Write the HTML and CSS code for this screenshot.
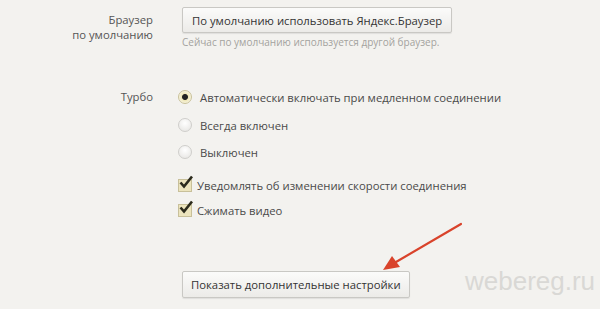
FILE: index.html
```html
<!DOCTYPE html>
<html lang="ru">
<head>
    <meta charset="UTF-8">
    <meta name="viewport" content="width=device-width, initial-scale=1.0">
    <title>Настройки</title>
    <link rel="stylesheet" href="styles.css">
</head>
<body>
    <div class="settings">
        <div class="row">
            <div class="label">Браузер<br>по умолчанию</div>
            <div class="content">
                <button class="button">По умолчанию использовать Яндекс.Браузер</button>
                <div class="hint">Сейчас по умолчанию используется другой браузер.</div>
            </div>
        </div>

        <div class="row turbo">
            <div class="label">Турбо</div>
            <div class="content options">
                <label class="option"><span class="radio checked"></span>Автоматически включать при медленном соединении</label>
                <label class="option second"><span class="radio"></span>Всегда включен</label>
                <label class="option"><span class="radio"></span>Выключен</label>
                <label class="option check-first"><span class="checkbox"><svg viewBox="0 0 16 16"><path d="M2.5 7.5 L6 11.5 L14 1.5" /></svg></span>Уведомлять об изменении скорости соединения</label>
                <label class="option check-next"><span class="checkbox"><svg viewBox="0 0 16 16"><path d="M2.5 7.5 L6 11.5 L14 1.5" /></svg></span>Сжимать видео</label>
            </div>
        </div>

        <div class="row more">
            <div class="label"></div>
            <div class="content">
                <button class="button">Показать дополнительные настройки</button>
            </div>
        </div>
    </div>

    <svg class="arrow" width="600" height="309" viewBox="0 0 600 309">
        <line x1="461" y1="224" x2="396" y2="262" stroke="#d9432b" stroke-width="2.2" stroke-linecap="round" />
        <path d="M383 270 L392 256 L400 267 Z" fill="#d9432b" />
    </svg>

    <div class="watermark">webereg.ru</div>
</body>
</html>
```

FILE: styles.css
```css
body {
    margin: 0;
    width: 600px;
    height: 309px;
    overflow: hidden;
    background-color: #f3f2ef;
    font-family: "Open Sans", "Noto Sans", sans-serif;
    font-size: 11.3px;
    color: #4a4a4a;
    position: relative;
}
.settings {
    padding-top: 7px;
}
.row {
    display: grid;
    grid-template-columns: 153px 1fr;
    column-gap: 29px;
}
.label {
    text-align: right;
    line-height: 15px;
    padding-top: 5px;
    color: #555;
}
.button {
    font-family: inherit;
    font-size: 11.3px;
    color: #333;
    height: 26px;
    padding: 0 9px;
    background: linear-gradient(#fbfbfa, #ecebe8);
    border: 1px solid #c9c8c4;
    border-radius: 2px;
    box-shadow: 0 1px 1px rgba(0, 0, 0, 0.08);
}
.hint {
    margin-top: 2px;
    font-size: 10px;
    color: #a3a29e;
}
.turbo {
    margin-top: 38px;
}
.turbo .label {
    padding-top: 0;
    line-height: 20px;
}
.options {
    display: flex;
    flex-direction: column;
    align-items: flex-start;
}
.option {
    display: flex;
    align-items: center;
    height: 20px;
    margin-top: 7px;
    margin-left: -4px;
}
.option:first-child {
    margin-top: 0;
}
.option.second {
    margin-top: 8px;
}
.option.check-first {
    margin-top: 13px;
}
.option.check-next {
    margin-top: 5px;
}
.radio {
    width: 12px;
    height: 12px;
    border-radius: 50%;
    border: 1px solid #cfcecb;
    background: radial-gradient(circle at 50% 35%, #ffffff, #e4e3e0);
    margin-right: 8px;
    flex-shrink: 0;
}
.radio.checked {
    border-color: #c9c19a;
    background: radial-gradient(circle, #222 0, #222 2.5px, #efe7b8 3.5px, #f7f3dc 6px);
}
.checkbox {
    width: 12px;
    height: 11px;
    border: 1px solid #c8c09a;
    background: #ece4bd;
    margin-right: 5px;
    position: relative;
    flex-shrink: 0;
}
.checkbox svg {
    position: absolute;
    left: -1px;
    top: -5px;
    width: 16px;
    height: 16px;
    fill: none;
    stroke: #2b2a1c;
    stroke-width: 2.6;
}
.more {
    margin-top: 51px;
}
.more .button {
    height: 27px;
    padding: 0 8px;
}
.arrow {
    position: absolute;
    left: 0;
    top: 0;
    pointer-events: none;
}
.watermark {
    position: absolute;
    left: 465px;
    top: 266px;
    font-family: "Liberation Sans", Arial, sans-serif;
    font-size: 26px;
    color: #d9d8d5;
}
```
